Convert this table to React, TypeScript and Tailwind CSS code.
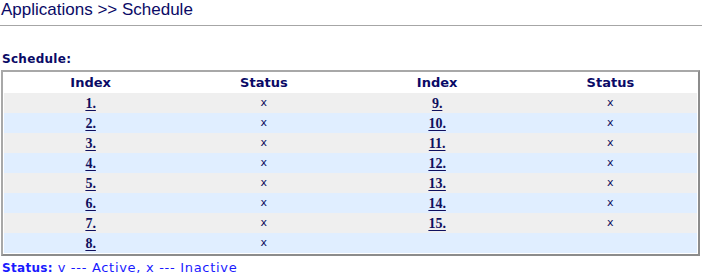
const rows = [
  { left: '1.', right: '9.' },
  { left: '2.', right: '10.' },
  { left: '3.', right: '11.' },
  { left: '4.', right: '12.' },
  { left: '5.', right: '13.' },
  { left: '6.', right: '14.' },
  { left: '7.', right: '15.' },
  { left: '8.', right: '' },
]

const verdana = "font-['DejaVu_Sans',Verdana,sans-serif]"

function IndexLink({ label }: { label: string }) {
  if (!label) return null
  return (
    <a href="#" className="font-['Liberation_Serif',serif] text-[14px] font-bold text-[#10105e] underline underline-offset-[2px]">
      {label}
    </a>
  )
}

export default function App() {
  return (
    <div className="h-[277px] w-[702px] overflow-hidden bg-white">
      <div className="pl-[1px] pt-[1px] font-['Liberation_Sans',Arial,sans-serif] text-[17px] leading-[18px] text-[#0a0a66]">
        Applications &gt;&gt; Schedule
      </div>
      <div className="mt-[6px] border-t border-[#a6a6a6]" />

      <div className={`mt-[26px] pl-[2px] text-[12px] font-bold leading-[15px] tracking-[0.3px] text-[#0a0a66] ${verdana}`}>
        Schedule:
      </div>

      <div className="mt-[3px] ml-[1px] w-[699px] border-2 border-t-[#a8a8a8] border-l-[#a8a8a8] border-r-[#8c8c8c] border-b-[#8c8c8c] p-[1px]">
        <div className={`grid h-[20px] grid-cols-4 items-center text-center text-[13px] font-bold text-[#0a0a66] ${verdana}`}>
          <span>Index</span>
          <span>Status</span>
          <span>Index</span>
          <span>Status</span>
        </div>
        {rows.map((r, i) => (
          <div
            key={r.left}
            className={`grid h-[20px] grid-cols-4 items-center text-center ${i % 2 === 0 ? 'bg-[#efefef]' : 'bg-[#e0eeff]'}`}
          >
            <span className="leading-[16px]">
              <IndexLink label={r.left} />
            </span>
            <span className={`text-[11px] text-[#10105e] ${verdana}`}>x</span>
            <span className="leading-[16px]">
              <IndexLink label={r.right} />
            </span>
            <span className={`text-[11px] text-[#10105e] ${verdana}`}>{r.right ? 'x' : ''}</span>
          </div>
        ))}
      </div>

      <div className={`mt-[4px] pl-[2px] text-[13px] leading-[15px] tracking-[0.7px] text-[#1a1aff] ${verdana}`}>
        <span className="text-[12px] font-bold tracking-[0.3px]">Status:</span> v --- Active, x --- Inactive
      </div>
    </div>
  )
}
